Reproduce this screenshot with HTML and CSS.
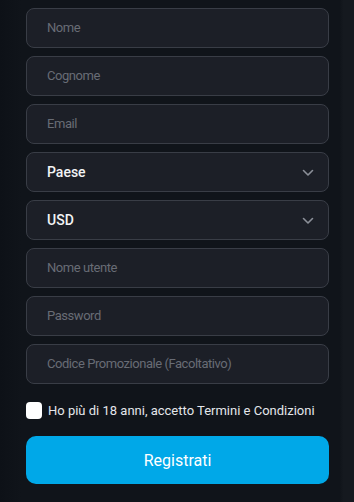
FILE: index.html
```html
<!DOCTYPE html>
<html lang="it">
<head>
<meta charset="utf-8">
<link rel="stylesheet" href="styles.css">
</head>
<body>
<div class="page">
  <form class="form">
    <div class="field"><span class="ph">Nome</span></div>
    <div class="field"><span class="ph">Cognome</span></div>
    <div class="field"><span class="ph">Email</span></div>
    <div class="field select"><span class="val">Paese</span>
      <svg class="chev" width="12" height="8" viewBox="0 0 12 8"><path d="M1.5 1.5 6 6l4.5-4.5" fill="none" stroke="#8b8f98" stroke-width="1.6" stroke-linecap="round" stroke-linejoin="round"/></svg>
    </div>
    <div class="field select"><span class="val">USD</span>
      <svg class="chev" width="12" height="8" viewBox="0 0 12 8"><path d="M1.5 1.5 6 6l4.5-4.5" fill="none" stroke="#8b8f98" stroke-width="1.6" stroke-linecap="round" stroke-linejoin="round"/></svg>
    </div>
    <div class="field"><span class="ph">Nome utente</span></div>
    <div class="field"><span class="ph">Password</span></div>
    <div class="field"><span class="ph">Codice Promozionale (Facoltativo)</span></div>
    <label class="check"><span class="box"></span><span class="ctext">Ho più di 18 anni, accetto Termini e Condizioni</span></label>
    <div class="btn">Registrati</div>
  </form>
</div>
</body>
</html>
```
FILE: styles.css
```css
html, body { margin: 0; padding: 0; }
body {
  background: #0f1319;
  font-family: Roboto, "Noto Sans", sans-serif;
  width: 354px;
  height: 502px;
  overflow: hidden;
}
.page {
  height: 502px;
  background: linear-gradient(to right, #0d1117 0, #10141a 6%, #10141a 96%, #15191f 97%, #15191f 100%);
}
.form {
  display: flex;
  flex-direction: column;
  gap: 8px;
  padding: 8px 25px 0 26px;
}
.field {
  box-sizing: border-box;
  height: 40px;
  border: 1px solid #393d46;
  border-radius: 8px;
  background: #1c1f27;
  display: flex;
  align-items: center;
  padding: 0 14px 1px 20px;
}
.ph {
  color: #686c75;
  font-size: 13px;
  letter-spacing: -0.45px;
}
.select { justify-content: space-between; padding-bottom: 0; }
.val {
  color: #f2f3f5;
  font-size: 14px;
  font-weight: 500;
}
.chev { margin-top: 1px; }
.check {
  display: flex;
  align-items: center;
  gap: 6px;
  margin-top: 10px;
  height: 16px;
}
.box {
  width: 16px;
  height: 17px;
  background: #fff;
  border-radius: 4px;
}
.ctext {
  color: #e4e6ea;
  font-size: 13px;
}
.btn {
  margin-top: 10px;
  height: 48px;
  border-radius: 10px;
  background: #00a8e8;
  color: #fff;
  font-size: 16px;
  display: flex;
  align-items: center;
  justify-content: center;
}
```
